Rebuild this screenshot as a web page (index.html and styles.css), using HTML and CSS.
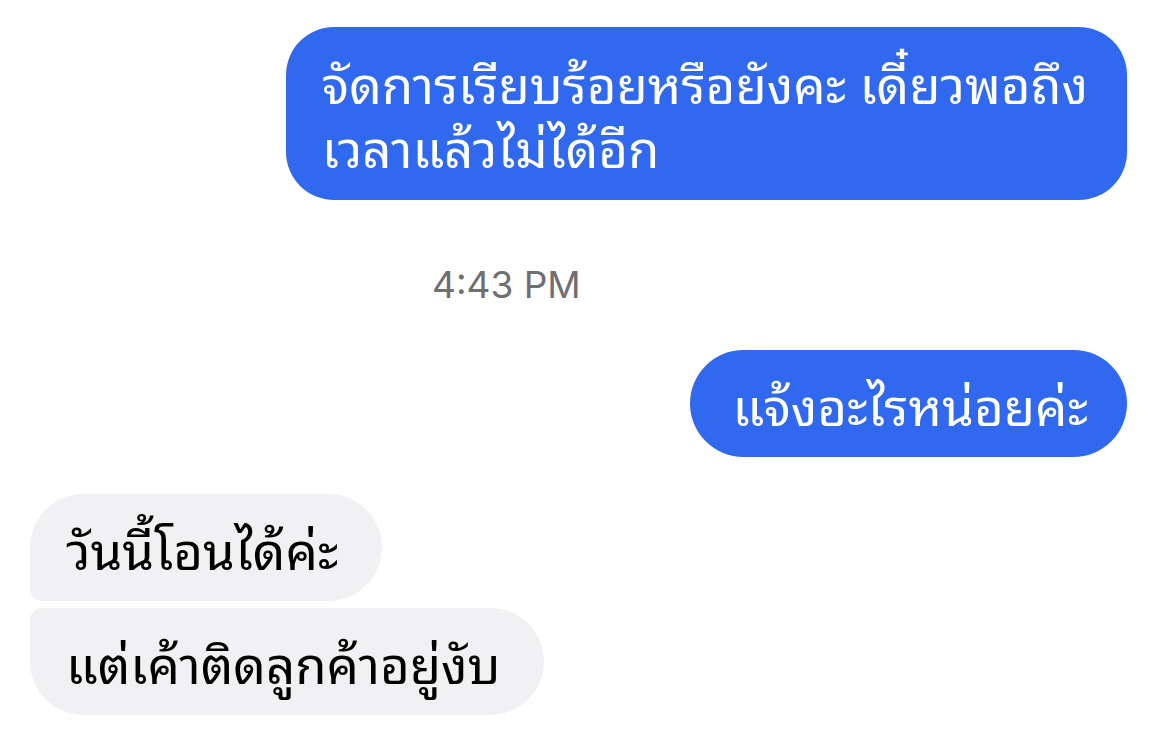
FILE: index.html
```html
<!DOCTYPE html>
<html lang="th">
<head>
<meta charset="utf-8">
<link rel="stylesheet" href="styles.css">
</head>
<body>
<div class="chat">
  <div class="row out first">
    <div class="bubble blue">จัดการเรียบร้อยหรือยังคะ เดี๋ยวพอถึง<br>เวลาแล้วไม่ได้อีก</div>
  </div>
  <div class="time">4:43 PM</div>
  <div class="row out">
    <div class="bubble blue single">แจ้งอะไรหน่อยค่ะ</div>
  </div>
  <div class="group">
    <div class="row in">
      <div class="bubble gray top">วันนี้โอนได้ค่ะ</div>
    </div>
    <div class="row in">
      <div class="bubble gray bottom">แต่เค้าติดลูกค้าอยู่งับ</div>
    </div>
  </div>
</div>
</body>
</html>
```
FILE: styles.css
```css
html, body {
  margin: 0;
  padding: 0;
  background: #ffffff;
}
body {
  width: 1151px;
  height: 737px;
  overflow: hidden;
  font-family: "Noto Sans Thai Looped", "Noto Sans Thai", "Noto Sans", "DejaVu Sans", sans-serif;
}
.chat {
  display: flex;
  flex-direction: column;
  padding: 27px 24px 0 30px;
}
.row {
  display: flex;
}
.row.out {
  justify-content: flex-end;
}
.row.in {
  justify-content: flex-start;
}
.bubble {
  font-size: 51px;
  line-height: 62px;
  padding: 24px 39px 25px 36px;
  border-radius: 48px;
  white-space: nowrap;
}
.blue {
  background: #3069f0;
  color: #ffffff;
}
.blue.first-text {
  line-height: 64px;
}
.row.first .bubble {
  line-height: 64px;
  padding: 22px 39px 23px 36px;
}
.blue.single {
  padding: 22px 39px 23px 42px;
  border-radius: 54px;
}
.gray {
  background: #f1f1f4;
  color: #000000;
  padding: 22px 44px 23px 36px;
}
.gray.top {
  border-radius: 54px 54px 54px 12px;
}
.gray.bottom {
  border-radius: 12px 54px 54px 54px;
}
.time {
  font-family: "Inter", "Liberation Sans", sans-serif;
  font-size: 37px;
  line-height: 40px;
  color: #6e6e73;
  padding-left: 402px;
  margin-top: 65px;
  margin-bottom: 45px;
}
.group {
  display: flex;
  flex-direction: column;
  gap: 7px;
  margin-top: 37px;
}
```
